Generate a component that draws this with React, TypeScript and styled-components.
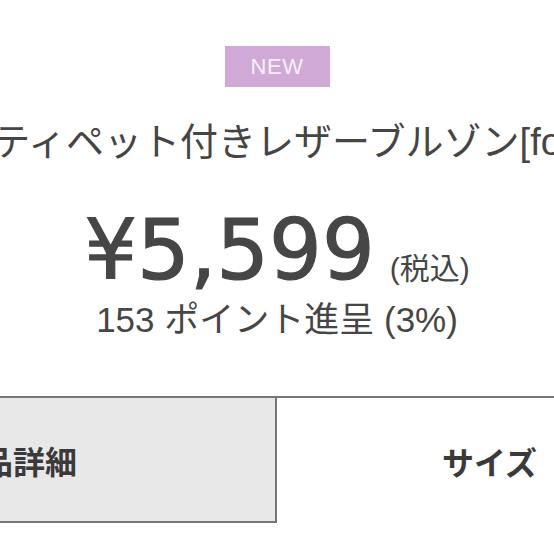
import React from "react";
import styled, { createGlobalStyle } from "styled-components";

const Global = createGlobalStyle`
  html, body { margin: 0; padding: 0; background: #ffffff; }
  body { font-family: "Liberation Sans", "Noto Sans CJK JP", sans-serif; color: #444444; }
`;

const Page = styled.div`
  width: 554px;
  height: 554px;
  overflow: hidden;
  display: flex;
  flex-direction: column;
  align-items: center;
  background: #ffffff;
`;

const Badge = styled.div`
  margin-top: 46px;
  width: 105px;
  height: 41px;
  display: flex;
  align-items: center;
  justify-content: center;
  background: #d0a9d7;
  color: #f8f0fa;
  font-family: "Liberation Sans", sans-serif;
  font-size: 22px;
  letter-spacing: 0.5px;
  flex-shrink: 0;
`;

const Title = styled.h1`
  margin: 34px 0 0;
  font-family: "Liberation Sans", "Noto Sans CJK JP", sans-serif;
  font-weight: 400;
  font-size: 38px;
  line-height: 42px;
  white-space: nowrap;
  color: #454545;
  flex-shrink: 0;
`;

const PriceRow = styled.div`
  margin-top: 46px;
  display: flex;
  align-items: baseline;
  gap: 15px;
  flex-shrink: 0;
`;

const Price = styled.span`
  font-family: "DejaVu Sans", sans-serif;
  font-weight: 400;
  font-size: 83px;
  line-height: 84px;
  letter-spacing: 0px;
  color: #464646;
  -webkit-text-stroke: 1.2px #464646;
`;

const Tax = styled.span`
  font-family: "Liberation Sans", "Noto Sans CJK JP", sans-serif;
  font-size: 30px;
  line-height: 30px;
  color: #464646;
`;

const Points = styled.div`
  margin-top: 7px;
  font-family: "Liberation Sans", "Noto Sans CJK JP", sans-serif;
  font-size: 35px;
  line-height: 40px;
  white-space: nowrap;
  color: #464646;
  flex-shrink: 0;
`;

const TabRow = styled.div`
  margin-top: 56px;
  width: 1052px;
  display: flex;
  border-top: 2px solid #767676;
  flex-shrink: 0;
`;

const Tab = styled.div<{ $active?: boolean; $start?: boolean }>`
  box-sizing: border-box;
  width: 526px;
  height: 125px;
  display: flex;
  align-items: center;
  justify-content: ${(p) => (p.$start ? "flex-start" : "center")};
  padding-left: ${(p) => (p.$start ? "165px" : "0")};
  font-family: "Noto Sans CJK JP", sans-serif;
  font-weight: 700;
  font-size: 32px;
  color: #3a3a3a;
  background: ${(p) => (p.$active ? "#e8e8e8" : "#ffffff")};
  border-right: ${(p) => (p.$active ? "2px solid #767676" : "none")};
  border-bottom: ${(p) => (p.$active ? "2px solid #767676" : "none")};
`;

export default function App() {
  return (
    <>
      <Global />
      <Page>
        <Badge>NEW</Badge>
        <Title>ティペット付きレザーブルゾン[fo</Title>
        <PriceRow>
          <Price>¥5,599</Price>
          <Tax>(税込)</Tax>
        </PriceRow>
        <Points>153 ポイント進呈 (3%)</Points>
        <TabRow>
          <Tab $active>商品詳細</Tab>
          <Tab $start>サイズ</Tab>
        </TabRow>
      </Page>
    </>
  );
}
